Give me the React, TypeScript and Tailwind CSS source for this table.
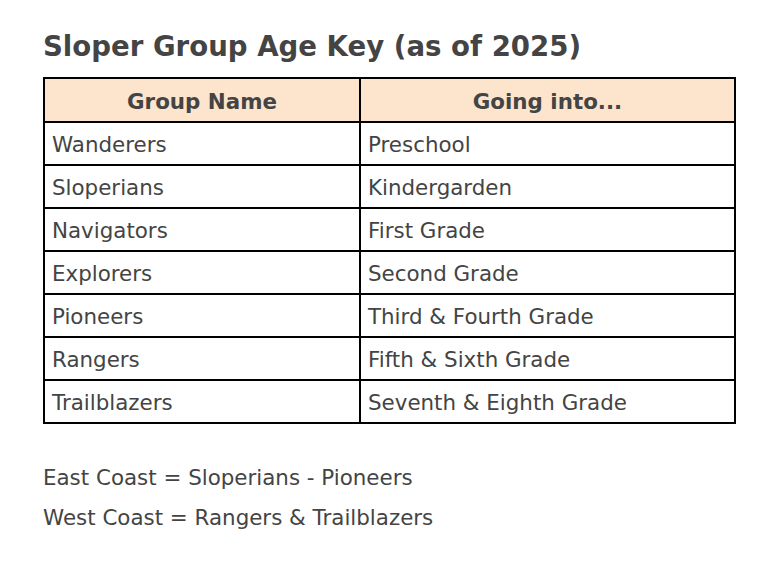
const rows: [string, string][] = [
  ["Wanderers", "Preschool"],
  ["Sloperians", "Kindergarden"],
  ["Navigators", "First Grade"],
  ["Explorers", "Second Grade"],
  ["Pioneers", "Third & Fourth Grade"],
  ["Rangers", "Fifth & Sixth Grade"],
  ["Trailblazers", "Seventh & Eighth Grade"],
];

export default function App() {
  return (
    <div className="min-h-[583px] bg-white pl-[43px] pr-[44px] pt-[27px] font-['DejaVu_Sans',Verdana,sans-serif] text-[#444]">
      <h2 className="text-[27.6px] font-bold leading-[40px]">Sloper Group Age Key (as of 2025)</h2>

      <table className="mt-[10px] w-[693px] border-collapse border-2 border-black text-[21.4px]">
        <thead>
          <tr className="bg-[#fde4cc]">
            <th className="h-[44px] w-[316px] border-2 border-black pt-[5px] text-center font-bold">Group Name</th>
            <th className="h-[44px] border-2 border-black pt-[5px] text-center font-bold">Going into...</th>
          </tr>
        </thead>
        <tbody>
          {rows.map(([group, grade]) => (
            <tr key={group}>
              <td className="h-[43px] border-2 border-black px-[7px] pt-[4px]">{group}</td>
              <td className="h-[43px] border-2 border-black px-[7px] pt-[4px]">{grade}</td>
            </tr>
          ))}
        </tbody>
      </table>

      <div className="mt-[34px] text-[21.4px] leading-[40px]">
        <p>East Coast = Sloperians - Pioneers</p>
        <p>West Coast = Rangers &amp; Trailblazers</p>
      </div>
    </div>
  );
}
